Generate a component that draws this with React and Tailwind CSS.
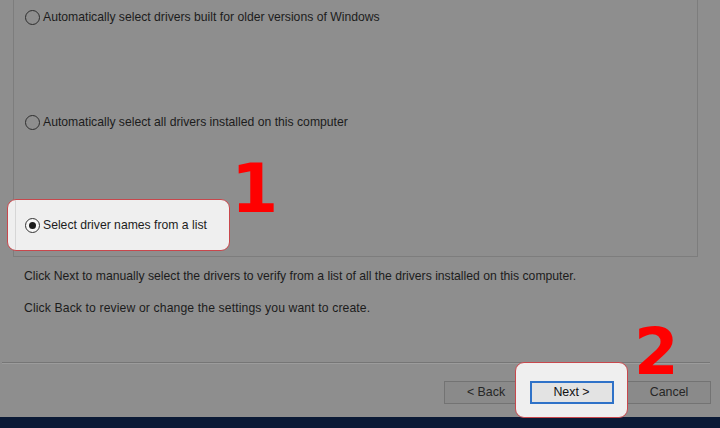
import React from 'react';

const font = { fontFamily: '"Liberation Sans", Arial, sans-serif' };
const digitFont = { fontFamily: '"DejaVu Sans", sans-serif' };

function Radio({ label, checked, className = '' }) {
  return (
    <div className={`flex items-center h-[15px] ${className}`}>
      <span className={`w-[15px] h-[15px] rounded-full border flex items-center justify-center shrink-0 ${checked ? 'border-[#333] bg-[#f7f7f7]' : 'border-[#2e2e2e]'}`}>
        {checked && <span className="w-[7px] h-[7px] rounded-full bg-[#1b1b1b]" />}
      </span>
      <span className="ml-[3px] text-[12.2px] leading-none text-[#1c1c1c] whitespace-nowrap">{label}</span>
    </div>
  );
}

function Btn({ children, active }) {
  return (
    <div className={`w-[84px] h-[23px] flex items-center justify-center text-[12.4px] ${active ? 'border-2 border-[#2f72c8] bg-[#e3e3e3] text-[#111]' : 'border border-[#737373] bg-[#8a8a8a] text-[#262626]'}`}>
      {children}
    </div>
  );
}

export default function App() {
  return (
    <div className="relative w-[720px] h-[428px] overflow-hidden bg-[#8e8e8e] flex flex-col" style={font}>
      {/* group box with the three choices */}
      <div className="ml-[13px] w-[685px] h-[257px] shrink-0 border-x border-b border-[#7d7d7d] flex flex-col">
        <Radio className="mt-[10px] ml-[11px]" label="Automatically select drivers built for older versions of Windows" />
        <Radio className="mt-[90px] ml-[11px]" label="Automatically select all drivers installed on this computer" />
        <div className="relative z-10 mt-[69px] -ml-[7px] w-[223px] h-[52px] rounded-[9px] border-[1.5px] border-[#c8474c] bg-[#efefef] flex items-center">
          <div className="ml-[7px] w-px h-full bg-[#d6d6d6]" />
          <Radio checked className="ml-[9px]" label="Select driver names from a list" />
        </div>
      </div>

      <p className="mt-[11px] ml-[24px] text-[12.2px] leading-[16px] text-[#1c1c1c] whitespace-nowrap">
        Click Next to manually select the drivers to verify from a list of all the drivers installed on this computer.
      </p>
      <p className="mt-[16px] ml-[24px] text-[12.2px] tracking-[0.12px] leading-[16px] text-[#1c1c1c] whitespace-nowrap">
        Click Back to review or change the settings you want to create.
      </p>

      <div className="mt-[46px] ml-[2px] w-[708px] h-[2px] border-t border-[#767676] border-b border-b-[#9c9c9c]" />

      {/* wizard buttons */}
      <div className="mt-[17px] h-[23px] flex items-start justify-end pr-[9px]">
        <Btn>&lt; Back</Btn>
        <div className="relative z-10 -ml-[13px] -mt-[19px] h-[56px] rounded-[9px] border-[1.5px] border-[#c8474c] bg-[#efefef] pt-[17.5px] px-[13.5px]">
          <Btn active>Next &gt;</Btn>
        </div>
        <div className="-ml-px">
          <Btn>Cancel</Btn>
        </div>
      </div>

      <div className="mt-auto h-[11px] bg-[#0b1a36]" />

      <span className="absolute left-[231px] top-[164px] text-[68px] leading-[50px] font-bold text-[#ff0000]" style={digitFont}>1</span>
      <span className="absolute left-[634px] top-[328px] text-[64px] leading-[48px] font-bold text-[#ff0000]" style={digitFont}>2</span>
    </div>
  );
}
